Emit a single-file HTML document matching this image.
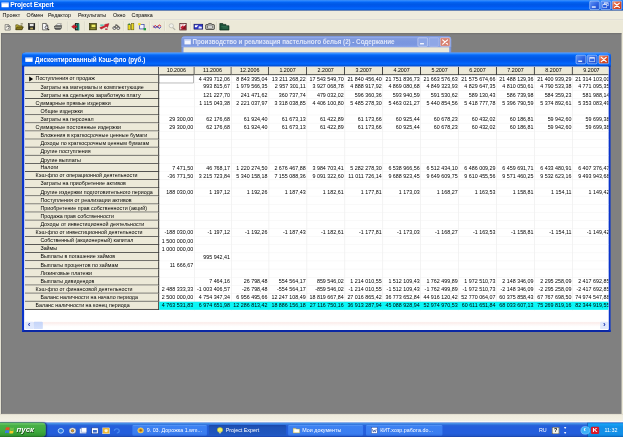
<!DOCTYPE html>
<html lang="ru"><head><meta charset="utf-8"><title>Project Expert</title>
<style>
html,body{margin:0;padding:0;width:623px;height:437px;overflow:hidden;background:#808080;}
#scr{position:absolute;left:0;top:0;width:1280px;height:1024px;transform-origin:0 0;transform:scale(0.48672,0.42676);overflow:hidden;filter:hue-rotate(0deg);font-family:"Liberation Sans",sans-serif;font-size:11px;color:#000;}
#scr div,#scr span{position:absolute;box-sizing:border-box;white-space:nowrap;}
.tb{background:linear-gradient(#0a5fe8 0%,#3d95ff 6%,#1a7bff 12%,#0463f2 22%,#0058e6 40%,#0058ee 60%,#0466fb 78%,#0260ee 88%,#0048c8 96%,#0038a8 100%);}
.tbi{background:linear-gradient(#7a96df 0%,#95acec 8%,#829cdf 20%,#7a96df 50%,#7b97e0 80%,#8aa4e8 92%,#7088d0 100%);}
.ttl{color:#fff;font-weight:bold;font-size:13px;transform:scaleY(1.18);}
.cb{border:1px solid #fff;border-radius:3px;width:21px;height:21px;background:linear-gradient(135deg,#5f93f5,#2a5fe0 60%,#2050c8);}
.cb.x{background:linear-gradient(135deg,#f0a080,#e0522a 50%,#c03a18);}
.cbi{border:1px solid #e6ebf8;border-radius:3px;width:21px;height:21px;background:#8da6e6;}
.cbi.x{background:#d88070;}
.m{top:3px;font-size:11px;}
.lab{left:0;width:275.9px;height:19px;background:#ece9d8;border-bottom:2px solid #383838;border-right:2px solid #383838;line-height:19px;font-size:11px;}
.num{height:19px;line-height:19px;text-align:right;font-size:11px;padding-right:3px;transform:scaleY(1.1);}
.lt{height:17px;line-height:17px;font-size:11px;transform:scaleY(1.18);}
.hd span{position:static !important;display:inline-block;transform:scaleY(1.12);}
.hd{top:0;height:19px;background:#ece9d8;border-right:2px solid #383838;border-bottom:2px solid #383838;text-align:center;line-height:16px;font-size:11px;}
.vl{top:19px;width:1px;background:#e6e6e6;}
.hl{left:0;height:1px;background:#f0f0f0;}
.tk{top:3px;height:25px;border-radius:3px;background:linear-gradient(#5c9bf5 0%,#3c81f3 12%,#3a7df0 80%,#316fe0 100%);color:#fff;font-size:11px;line-height:24px;}
.tk.on{background:linear-gradient(#1b48a8 0%,#1e52b7 20%,#2158c2 100%);}
.sep{width:2px;top:4px;height:24px;border-left:1px solid #d2cfbf;border-right:1px solid #f8f7f0;}
</style></head><body><div id="scr">

<div class="tb" style="left:0;top:0;width:1280px;height:25px;"></div>
<div style="left:3px;top:6px;width:15px;height:11px;background:#fff;border-top:2px solid #8fb8ff;"></div>
<span class="ttl" style="left:21px;top:3px;font-size:14px;letter-spacing:-0.4px;">Project Expert</span>
<div class="cb" style="left:1211px;top:2px;"><div style="left:4px;top:12px;width:8px;height:3px;background:#fff;"></div></div>
<div class="cb" style="left:1234px;top:2px;"><div style="left:6px;top:3px;width:9px;height:8px;border:1px solid #fff;border-top-width:2px;"></div><div style="left:3px;top:7px;width:9px;height:8px;border:1px solid #fff;border-top-width:2px;background:#2a5fe0;"></div></div>
<div class="cb x" style="left:1257px;top:2px;"><svg style="position:absolute;left:0;top:0" width="19" height="19" viewBox="0 0 19 19"><path d="M4.500 4.500l10 10M14.500 4.500l-10 10" stroke="#fff" stroke-width="2.600" stroke-linecap="round"/></svg></div>
<div style="left:0;top:25px;width:1280px;height:21px;background:#efecde;border-bottom:1px solid #b4b1a2;"></div>
<span class="m" style="left:5.3px;top:30px;">Проект</span>
<span class="m" style="left:54.4px;top:30px;">Обмен</span>
<span class="m" style="left:98.6px;top:30px;">Редактор</span>
<span class="m" style="left:160.1px;top:30px;">Результаты</span>
<span class="m" style="left:232.2px;top:30px;">Окно</span>
<span class="m" style="left:270.4px;top:30px;">Справка</span>
<div style="left:0;top:46px;width:1280px;height:33px;background:#ece9d8;border-top:1px solid #fff;"></div>
<div class="sep" style="left:79.1px;top:50px;height:22px;"></div>
<div class="sep" style="left:137.7px;top:50px;height:22px;"></div>
<div class="sep" style="left:172.6px;top:50px;height:22px;"></div>
<div class="sep" style="left:253.7px;top:50px;height:22px;"></div>
<div class="sep" style="left:307.2px;top:50px;height:22px;"></div>
<div class="sep" style="left:338.0px;top:50px;height:22px;"></div>
<div class="sep" style="left:391.4px;top:50px;height:22px;"></div>
<div class="sep" style="left:444.8px;top:50px;height:22px;"></div>
<svg style="position:absolute;left:8.0px;top:54px;overflow:visible" width="16" height="17" viewBox="0 0 16 16" preserveAspectRatio="none"><path d="M2.5 3.5h7l3.5 3.5v8.5h-10.5z" fill="#f6f4ea" stroke="#444" stroke-width="1.2"/><path d="M9 3.5v4h4" fill="none" stroke="#444"/><path d="M5 10a3 3 0 1 1 3 3" fill="none" stroke="#555" stroke-width="1.6"/></svg>
<svg style="position:absolute;left:32.3px;top:54px;overflow:visible" width="16" height="17" viewBox="0 0 16 16" preserveAspectRatio="none"><path d="M0.5 4h5l1 2h7v8.5h-13z" fill="#c8b838" stroke="#3a3408" stroke-width="1.2"/><path d="M3 8.5h13l-3 6H0.5z" fill="#847618" stroke="#3a3408" stroke-width="1.2"/><path d="M10 2l4-1-1 3" fill="none" stroke="#3a3408"/></svg>
<svg style="position:absolute;left:56.5px;top:54px;overflow:visible" width="16" height="17" viewBox="0 0 16 16" preserveAspectRatio="none"><rect x="1.5" y="1.5" width="13" height="13" fill="#202020" stroke="#000"/><rect x="4" y="2" width="8" height="5" fill="#e8e8e8"/><rect x="5" y="10" width="6" height="4" fill="#b8a860"/></svg>
<svg style="position:absolute;left:85.7px;top:54px;overflow:visible" width="16" height="17" viewBox="0 0 16 16" preserveAspectRatio="none"><path d="M1.5 1h7l3.5 3.5v10.5h-10.5z" fill="#fff" stroke="#222" stroke-width="1.3"/><path d="M8.5 1v4h3.5" fill="none" stroke="#222"/><circle cx="9.5" cy="9.5" r="3" fill="#e8e8f4" stroke="#222" stroke-width="1.4"/><path d="M11.5 12l3.5 3.5" stroke="#222" stroke-width="2.2"/></svg>
<svg style="position:absolute;left:112.0px;top:54px;overflow:visible" width="16" height="17" viewBox="0 0 16 16" preserveAspectRatio="none"><path d="M3 6l3-4.5h8l-2.5 4.5z" fill="#fff" stroke="#444"/><path d="M0.5 7l2-1.5h13l-1.5 1.5z" fill="#d0d0c8" stroke="#333"/><rect x="0.5" y="7" width="14" height="5.5" fill="#a4a49c" stroke="#333"/><rect x="2.5" y="11.5" width="10" height="3" fill="#777" stroke="#333"/></svg>
<svg style="position:absolute;left:147.1px;top:54px;overflow:visible" width="16" height="17" viewBox="0 0 16 16" preserveAspectRatio="none"><rect x="7.5" y="0.5" width="7" height="15" fill="#141414" stroke="#000"/><rect x="13" y="1" width="3" height="15" fill="#1a9080"/><path d="M9 3v10l3 2V1z" fill="#30a898"/><path d="M0 8l6-5v3h5v4H6v3z" fill="#d81828" stroke="#780010" stroke-width=".7"/></svg>
<svg style="position:absolute;left:182.5px;top:54px;overflow:visible" width="16" height="17" viewBox="0 0 16 16" preserveAspectRatio="none"><rect x="1" y="1" width="14" height="14" fill="#5c5c14" stroke="#2c2c04" stroke-width="1.4"/><rect x="5" y="3.5" width="8" height="5.5" fill="#ecec68"/><rect x="3" y="10.5" width="10" height="3" fill="#8c8c2c"/></svg>
<svg style="position:absolute;left:206.5px;top:54px;overflow:visible" width="16" height="17" viewBox="0 0 16 16" preserveAspectRatio="none"><path d="M-1 3h7v4h-7z" fill="#68c8b8"/><path d="M-2 10l10-4v-3l9-2-3 9-2.500-2.500-11 6z" fill="#d42030" stroke="#7c0c18" stroke-width=".7"/><rect x="9" y="12" width="5" height="3" fill="#b03040"/></svg>
<svg style="position:absolute;left:230.7px;top:54px;overflow:visible" width="16" height="17" viewBox="0 0 16 16" preserveAspectRatio="none"><circle cx="4" cy="11" r="3.2" fill="#eee" stroke="#222" stroke-width="1.4"/><circle cx="12" cy="11" r="3.2" fill="#eee" stroke="#222" stroke-width="1.4"/><path d="M4 11l3-6h4l1 6M6 4h3" fill="none" stroke="#222" stroke-width="1.4"/></svg>
<svg style="position:absolute;left:261.1px;top:54px;overflow:visible" width="16" height="17" viewBox="0 0 16 16" preserveAspectRatio="none"><rect x="2" y="3" width="5" height="12" fill="#e8d820" stroke="#504800"/><rect x="9" y="1" width="5" height="14" fill="#e8d820" stroke="#504800"/><rect x="3" y="1" width="3" height="3" fill="#208040"/></svg>
<svg style="position:absolute;left:283.5px;top:54px;overflow:visible" width="16" height="17" viewBox="0 0 16 16" preserveAspectRatio="none"><rect x="3" y="3" width="9" height="10" fill="#f4f4ff" stroke="#2030a0" stroke-width="1.4"/><rect x="0" y="0" width="5" height="5" fill="#f0e020"/><rect x="11" y="11" width="5" height="5" fill="#20a040"/></svg>
<svg style="position:absolute;left:315.4px;top:54px;overflow:visible" width="16" height="17" viewBox="0 0 16 16" preserveAspectRatio="none"><path d="M0 10l4-5 4 5 4-6 4 3" fill="none" stroke="#d02030" stroke-width="2"/><path d="M0 6l4 5 4-4 4 5 4-4" fill="none" stroke="#2030c0" stroke-width="2"/></svg>
<svg style="position:absolute;left:345.0px;top:54px;overflow:visible" width="16" height="17" viewBox="0 0 16 16" preserveAspectRatio="none"><circle cx="7" cy="6" r="4.5" fill="#f0f0ea" stroke="#b8b8b0" stroke-width="1.5"/><path d="M10 10l5 5" stroke="#b0b0a8" stroke-width="2.4"/></svg>
<svg style="position:absolute;left:368.4px;top:54px;overflow:visible" width="16" height="17" viewBox="0 0 16 16" preserveAspectRatio="none"><rect x="1.5" y="0.8" width="13" height="14.5" fill="#f8eef0" stroke="#40080c" stroke-width="1.5"/><path d="M14 3v12H3z" fill="#8c1020"/><path d="M3 9l5-4 2 3-5 5z" fill="#c81830"/><rect x="4" y="2.500" width="6" height="2" fill="#e8b0b8"/></svg>
<svg style="position:absolute;left:397.7px;top:54px;overflow:visible" width="19" height="17" viewBox="0 0 16 16" preserveAspectRatio="none"><rect x="0.5" y="2.500" width="15" height="11" fill="#2c34c8" stroke="#10145c" stroke-width="1.2"/><path d="M2 5h6l-3 4H2z" fill="#fff"/><path d="M9 7l5 1v4H8z" fill="#e8ecff"/></svg>
<svg style="position:absolute;left:421.8px;top:54px;overflow:visible" width="19" height="17" viewBox="0 0 16 16" preserveAspectRatio="none"><rect x="0.6" y="3.500" width="14.800" height="10.500" rx="1" fill="#d4d4cc" stroke="#1c1c1c" stroke-width="1.5"/><rect x="4" y="6.500" width="8" height="4.500" fill="#f8f8f8" stroke="#444"/><path d="M4 3.500l2-2.500h4l2 2.500" fill="#bbb" stroke="#1c1c1c" stroke-width="1.2"/></svg>
<svg style="position:absolute;left:451.3px;top:54px;overflow:visible" width="20" height="17" viewBox="0 0 16 16" preserveAspectRatio="none"><path d="M0.500 5V1h5v2h5v3h5v9.500h-15z" fill="#1c5038" stroke="#0a2818" stroke-width="1.2"/><path d="M3 8h10M5 11h9" stroke="#3c7c5c" stroke-width="1.4"/></svg>
<div style="left:0;top:77px;width:1280px;height:893px;background:#ece9d8;"></div>
<div style="left:2px;top:78px;width:1275px;height:892px;background:#808080;border-top:2px solid #646464;border-left:1px solid #6a6a6a;"></div>
<div style="left:0;top:970px;width:1280px;height:21px;background:linear-gradient(#d8d4c4 0%,#eeebdd 12%,#f1eee1 50%,#f3f0e5 75%,#ffffff 90%,#ffffff 100%);"></div>
<div style="left:372.5px;top:85px;width:554.5px;height:60px;background:#ece9d8;border:4px solid #7a96df;border-radius:7px 7px 0 0;"></div>
<div class="tbi" style="left:372.5px;top:85px;width:554.5px;height:26px;border-radius:7px 7px 0 0;"></div>
<div style="left:378.5px;top:92px;width:13px;height:12px;background:#f4f6ff;border-top:3px solid #b8c8f4;"></div>
<span class="ttl" style="left:395.5px;top:90px;color:#dfe6fa;letter-spacing:-0.12px;">Производство и реализация пастельного белья (2) - Содержание</span>
<div class="cbi" style="left:858.0px;top:88px;"><div style="left:4px;top:12px;width:8px;height:3px;background:#fff;"></div></div>
<div class="cbi" style="left:881.0px;top:88px;background:#8fa7e6;border-color:#c0ccf2;"></div>
<div class="cbi x" style="left:904.0px;top:88px;"><svg style="position:absolute;left:0;top:0" width="19" height="19" viewBox="0 0 19 19"><path d="M4.500 4.500l10 10M14.500 4.500l-10 10" stroke="#fff" stroke-width="2.600" stroke-linecap="round"/></svg></div>
<div style="left:45px;top:122.5px;width:1210px;height:655.5px;background:#fff;border:5px solid #0a34cc;border-bottom-color:#0a27a4;border-top:0;border-radius:8px 8px 0 0;"></div>
<div class="tb" style="left:45px;top:122.5px;width:1210px;height:33px;border-radius:8px 8px 0 0;"></div>
<div style="left:52px;top:135.0px;width:15px;height:10px;background:#fff;border-top:2px solid #9cc0ff;"></div>
<span class="ttl" style="left:72px;top:133.0px;">Дисконтированный Кэш-фло (руб.)</span>
<div class="cb" style="left:1183.0px;top:128.5px;"><div style="left:4px;top:12px;width:8px;height:3px;background:#fff;"></div></div>
<div class="cb" style="left:1206.2px;top:128.5px;"><div style="left:4px;top:4px;width:11px;height:11px;border:1px solid #fff;border-top-width:3px;"></div></div>
<div class="cb x" style="left:1229.7px;top:128.5px;"><svg style="position:absolute;left:0;top:0" width="19" height="19" viewBox="0 0 19 19"><path d="M4.500 4.500l10 10M14.500 4.500l-10 10" stroke="#fff" stroke-width="2.600" stroke-linecap="round"/></svg></div>
<div style="left:51px;top:156.5px;width:1199px;height:596.5px;overflow:hidden;background:#fff;">
<div class="hd" style="left:0;width:275.9px;"></div>
<div class="hd" style="left:275.9px;width:72.9px;"><span>10.2006</span></div>
<div class="hd" style="left:348.8px;width:75.8px;"><span>11.2006</span></div>
<div class="hd" style="left:424.6px;width:77.1px;"><span>12.2006</span></div>
<div class="hd" style="left:501.7px;width:78.3px;"><span>1.2007</span></div>
<div class="hd" style="left:580.0px;width:78.2px;"><span>2.2007</span></div>
<div class="hd" style="left:658.2px;width:77.9px;"><span>3.2007</span></div>
<div class="hd" style="left:736.1px;width:78.1px;"><span>4.2007</span></div>
<div class="hd" style="left:814.2px;width:78.1px;"><span>5.2007</span></div>
<div class="hd" style="left:892.3px;width:77.8px;"><span>6.2007</span></div>
<div class="hd" style="left:970.1px;width:78.1px;"><span>7.2007</span></div>
<div class="hd" style="left:1048.2px;width:77.9px;"><span>8.2007</span></div>
<div class="hd" style="left:1126.1px;width:78.0px;"><span>9.2007</span></div>
<div class="vl" style="left:347.8px;height:551px;"></div>
<div class="vl" style="left:423.6px;height:551px;"></div>
<div class="vl" style="left:500.7px;height:551px;"></div>
<div class="vl" style="left:579.0px;height:551px;"></div>
<div class="vl" style="left:657.2px;height:551px;"></div>
<div class="vl" style="left:735.1px;height:551px;"></div>
<div class="vl" style="left:813.2px;height:551px;"></div>
<div class="vl" style="left:891.3px;height:551px;"></div>
<div class="vl" style="left:969.1px;height:551px;"></div>
<div class="vl" style="left:1047.2px;height:551px;"></div>
<div class="vl" style="left:1125.1px;height:551px;"></div>
<div class="vl" style="left:1203.1px;height:551px;"></div>
<div class="hl" style="top:36.97px;width:1199px;left:275.9px;"></div>
<div class="hl" style="top:55.94px;width:1199px;left:275.9px;"></div>
<div class="hl" style="top:74.91px;width:1199px;left:275.9px;"></div>
<div class="hl" style="top:93.88px;width:1199px;left:275.9px;"></div>
<div class="hl" style="top:112.85px;width:1199px;left:275.9px;"></div>
<div class="hl" style="top:131.82px;width:1199px;left:275.9px;"></div>
<div class="hl" style="top:150.79px;width:1199px;left:275.9px;"></div>
<div class="hl" style="top:169.76px;width:1199px;left:275.9px;"></div>
<div class="hl" style="top:188.73px;width:1199px;left:275.9px;"></div>
<div class="hl" style="top:207.70px;width:1199px;left:275.9px;"></div>
<div class="hl" style="top:226.67px;width:1199px;left:275.9px;"></div>
<div class="hl" style="top:245.64px;width:1199px;left:275.9px;"></div>
<div class="hl" style="top:264.61px;width:1199px;left:275.9px;"></div>
<div class="hl" style="top:283.58px;width:1199px;left:275.9px;"></div>
<div class="hl" style="top:302.55px;width:1199px;left:275.9px;"></div>
<div class="hl" style="top:321.52px;width:1199px;left:275.9px;"></div>
<div class="hl" style="top:340.49px;width:1199px;left:275.9px;"></div>
<div class="hl" style="top:359.46px;width:1199px;left:275.9px;"></div>
<div class="hl" style="top:378.43px;width:1199px;left:275.9px;"></div>
<div class="hl" style="top:397.40px;width:1199px;left:275.9px;"></div>
<div class="hl" style="top:416.37px;width:1199px;left:275.9px;"></div>
<div class="hl" style="top:435.34px;width:1199px;left:275.9px;"></div>
<div class="hl" style="top:454.31px;width:1199px;left:275.9px;"></div>
<div class="hl" style="top:473.28px;width:1199px;left:275.9px;"></div>
<div class="hl" style="top:492.25px;width:1199px;left:275.9px;"></div>
<div class="hl" style="top:511.22px;width:1199px;left:275.9px;"></div>
<div class="hl" style="top:530.19px;width:1199px;left:275.9px;"></div>
<div class="hl" style="top:549.16px;width:1199px;left:275.9px;"></div>
<div class="hl" style="top:568.13px;width:1199px;left:275.9px;"></div>
<div class="lab" style="top:19.00px;"></div><div class="lt" style="top:19.30px;left:22px;">Поступления от продаж</div>
<div class="num" style="left:348.8px;top:19.00px;width:75.8px;">4 439 712,06</div>
<div class="num" style="left:424.6px;top:19.00px;width:77.1px;">8 843 395,04</div>
<div class="num" style="left:501.7px;top:19.00px;width:78.3px;">13 211 268,22</div>
<div class="num" style="left:580.0px;top:19.00px;width:78.2px;">17 543 549,70</div>
<div class="num" style="left:658.2px;top:19.00px;width:77.9px;">21 840 456,40</div>
<div class="num" style="left:736.1px;top:19.00px;width:78.1px;">21 751 836,73</div>
<div class="num" style="left:814.2px;top:19.00px;width:78.1px;">21 663 576,63</div>
<div class="num" style="left:892.3px;top:19.00px;width:77.8px;">21 575 674,66</div>
<div class="num" style="left:970.1px;top:19.00px;width:78.1px;">21 488 129,36</div>
<div class="num" style="left:1048.2px;top:19.00px;width:77.9px;">21 400 939,29</div>
<div class="num" style="left:1126.1px;top:19.00px;width:78.0px;">21 314 103,00</div>
<div class="lab" style="top:37.97px;"></div><div class="lt" style="top:38.27px;left:32px;">Затраты на материалы и комплектующие</div>
<div class="num" style="left:348.8px;top:37.97px;width:75.8px;">993 815,67</div>
<div class="num" style="left:424.6px;top:37.97px;width:77.1px;">1 979 566,35</div>
<div class="num" style="left:501.7px;top:37.97px;width:78.3px;">2 957 301,11</div>
<div class="num" style="left:580.0px;top:37.97px;width:78.2px;">3 927 068,78</div>
<div class="num" style="left:658.2px;top:37.97px;width:77.9px;">4 888 917,92</div>
<div class="num" style="left:736.1px;top:37.97px;width:78.1px;">4 869 080,68</div>
<div class="num" style="left:814.2px;top:37.97px;width:78.1px;">4 849 323,93</div>
<div class="num" style="left:892.3px;top:37.97px;width:77.8px;">4 829 647,35</div>
<div class="num" style="left:970.1px;top:37.97px;width:78.1px;">4 810 050,61</div>
<div class="num" style="left:1048.2px;top:37.97px;width:77.9px;">4 790 533,38</div>
<div class="num" style="left:1126.1px;top:37.97px;width:78.0px;">4 771 095,35</div>
<div class="lab" style="top:56.94px;"></div><div class="lt" style="top:57.24px;left:32px;">Затраты на сдельную заработную плату</div>
<div class="num" style="left:348.8px;top:56.94px;width:75.8px;">121 227,70</div>
<div class="num" style="left:424.6px;top:56.94px;width:77.1px;">241 471,62</div>
<div class="num" style="left:501.7px;top:56.94px;width:78.3px;">360 737,74</div>
<div class="num" style="left:580.0px;top:56.94px;width:78.2px;">479 032,02</div>
<div class="num" style="left:658.2px;top:56.94px;width:77.9px;">596 360,36</div>
<div class="num" style="left:736.1px;top:56.94px;width:78.1px;">593 940,59</div>
<div class="num" style="left:814.2px;top:56.94px;width:78.1px;">591 530,62</div>
<div class="num" style="left:892.3px;top:56.94px;width:77.8px;">589 130,43</div>
<div class="num" style="left:970.1px;top:56.94px;width:78.1px;">586 739,98</div>
<div class="num" style="left:1048.2px;top:56.94px;width:77.9px;">584 359,23</div>
<div class="num" style="left:1126.1px;top:56.94px;width:78.0px;">581 988,14</div>
<div class="lab" style="top:75.91px;"></div><div class="lt" style="top:76.21px;left:22px;">Суммарные прямые издержки</div>
<div class="num" style="left:348.8px;top:75.91px;width:75.8px;">1 115 043,38</div>
<div class="num" style="left:424.6px;top:75.91px;width:77.1px;">2 221 037,97</div>
<div class="num" style="left:501.7px;top:75.91px;width:78.3px;">3 318 038,85</div>
<div class="num" style="left:580.0px;top:75.91px;width:78.2px;">4 406 100,80</div>
<div class="num" style="left:658.2px;top:75.91px;width:77.9px;">5 485 278,30</div>
<div class="num" style="left:736.1px;top:75.91px;width:78.1px;">5 463 021,27</div>
<div class="num" style="left:814.2px;top:75.91px;width:78.1px;">5 440 854,56</div>
<div class="num" style="left:892.3px;top:75.91px;width:77.8px;">5 418 777,78</div>
<div class="num" style="left:970.1px;top:75.91px;width:78.1px;">5 396 790,59</div>
<div class="num" style="left:1048.2px;top:75.91px;width:77.9px;">5 374 892,61</div>
<div class="num" style="left:1126.1px;top:75.91px;width:78.0px;">5 353 083,49</div>
<div class="lab" style="top:94.88px;"></div><div class="lt" style="top:95.18px;left:32px;">Общие издержки</div>
<div class="lab" style="top:113.85px;"></div><div class="lt" style="top:114.15px;left:32px;">Затраты на персонал</div>
<div class="num" style="left:275.9px;top:113.85px;width:72.9px;">29 300,00</div>
<div class="num" style="left:348.8px;top:113.85px;width:75.8px;">62 176,68</div>
<div class="num" style="left:424.6px;top:113.85px;width:77.1px;">61 924,40</div>
<div class="num" style="left:501.7px;top:113.85px;width:78.3px;">61 673,13</div>
<div class="num" style="left:580.0px;top:113.85px;width:78.2px;">61 422,89</div>
<div class="num" style="left:658.2px;top:113.85px;width:77.9px;">61 173,66</div>
<div class="num" style="left:736.1px;top:113.85px;width:78.1px;">60 925,44</div>
<div class="num" style="left:814.2px;top:113.85px;width:78.1px;">60 678,23</div>
<div class="num" style="left:892.3px;top:113.85px;width:77.8px;">60 432,02</div>
<div class="num" style="left:970.1px;top:113.85px;width:78.1px;">60 186,81</div>
<div class="num" style="left:1048.2px;top:113.85px;width:77.9px;">59 942,60</div>
<div class="num" style="left:1126.1px;top:113.85px;width:78.0px;">59 699,38</div>
<div class="lab" style="top:132.82px;"></div><div class="lt" style="top:133.12px;left:22px;">Суммарные постоянные издержки</div>
<div class="num" style="left:275.9px;top:132.82px;width:72.9px;">29 300,00</div>
<div class="num" style="left:348.8px;top:132.82px;width:75.8px;">62 176,68</div>
<div class="num" style="left:424.6px;top:132.82px;width:77.1px;">61 924,40</div>
<div class="num" style="left:501.7px;top:132.82px;width:78.3px;">61 673,13</div>
<div class="num" style="left:580.0px;top:132.82px;width:78.2px;">61 422,89</div>
<div class="num" style="left:658.2px;top:132.82px;width:77.9px;">61 173,66</div>
<div class="num" style="left:736.1px;top:132.82px;width:78.1px;">60 925,44</div>
<div class="num" style="left:814.2px;top:132.82px;width:78.1px;">60 678,23</div>
<div class="num" style="left:892.3px;top:132.82px;width:77.8px;">60 432,02</div>
<div class="num" style="left:970.1px;top:132.82px;width:78.1px;">60 186,81</div>
<div class="num" style="left:1048.2px;top:132.82px;width:77.9px;">59 942,60</div>
<div class="num" style="left:1126.1px;top:132.82px;width:78.0px;">59 699,38</div>
<div class="lab" style="top:151.79px;"></div><div class="lt" style="top:152.09px;left:32px;">Вложения в краткосрочные ценные бумаги</div>
<div class="lab" style="top:170.76px;"></div><div class="lt" style="top:171.06px;left:32px;">Доходы по краткосрочным ценным бумагам</div>
<div class="lab" style="top:189.73px;"></div><div class="lt" style="top:190.03px;left:32px;">Другие поступления</div>
<div class="lab" style="top:208.70px;"></div><div class="lt" style="top:209.00px;left:32px;">Другие выплаты</div>
<div class="lab" style="top:227.67px;"></div><div class="lt" style="top:227.97px;left:32px;">Налоги</div>
<div class="num" style="left:275.9px;top:227.67px;width:72.9px;">7 471,50</div>
<div class="num" style="left:348.8px;top:227.67px;width:75.8px;">46 768,17</div>
<div class="num" style="left:424.6px;top:227.67px;width:77.1px;">1 220 274,50</div>
<div class="num" style="left:501.7px;top:227.67px;width:78.3px;">2 676 467,88</div>
<div class="num" style="left:580.0px;top:227.67px;width:78.2px;">3 984 703,41</div>
<div class="num" style="left:658.2px;top:227.67px;width:77.9px;">5 282 278,30</div>
<div class="num" style="left:736.1px;top:227.67px;width:78.1px;">6 538 966,56</div>
<div class="num" style="left:814.2px;top:227.67px;width:78.1px;">6 512 434,10</div>
<div class="num" style="left:892.3px;top:227.67px;width:77.8px;">6 486 009,29</div>
<div class="num" style="left:970.1px;top:227.67px;width:78.1px;">6 459 691,71</div>
<div class="num" style="left:1048.2px;top:227.67px;width:77.9px;">6 433 480,91</div>
<div class="num" style="left:1126.1px;top:227.67px;width:78.0px;">6 407 376,47</div>
<div class="lab" style="top:246.64px;"></div><div class="lt" style="top:246.94px;left:22px;">Кэш-фло от операционной деятельности</div>
<div class="num" style="left:275.9px;top:246.64px;width:72.9px;">-36 771,50</div>
<div class="num" style="left:348.8px;top:246.64px;width:75.8px;">3 215 723,84</div>
<div class="num" style="left:424.6px;top:246.64px;width:77.1px;">5 340 158,18</div>
<div class="num" style="left:501.7px;top:246.64px;width:78.3px;">7 155 088,36</div>
<div class="num" style="left:580.0px;top:246.64px;width:78.2px;">9 091 322,60</div>
<div class="num" style="left:658.2px;top:246.64px;width:77.9px;">11 011 726,14</div>
<div class="num" style="left:736.1px;top:246.64px;width:78.1px;">9 688 923,45</div>
<div class="num" style="left:814.2px;top:246.64px;width:78.1px;">9 649 609,75</div>
<div class="num" style="left:892.3px;top:246.64px;width:77.8px;">9 610 455,56</div>
<div class="num" style="left:970.1px;top:246.64px;width:78.1px;">9 571 460,25</div>
<div class="num" style="left:1048.2px;top:246.64px;width:77.9px;">9 532 623,16</div>
<div class="num" style="left:1126.1px;top:246.64px;width:78.0px;">9 493 943,68</div>
<div class="lab" style="top:265.61px;"></div><div class="lt" style="top:265.91px;left:32px;">Затраты на приобретение активов</div>
<div class="lab" style="top:284.58px;"></div><div class="lt" style="top:284.88px;left:32px;">Другие издержки подготовительного периода</div>
<div class="num" style="left:275.9px;top:284.58px;width:72.9px;">188 030,00</div>
<div class="num" style="left:348.8px;top:284.58px;width:75.8px;">1 197,12</div>
<div class="num" style="left:424.6px;top:284.58px;width:77.1px;">1 192,26</div>
<div class="num" style="left:501.7px;top:284.58px;width:78.3px;">1 187,43</div>
<div class="num" style="left:580.0px;top:284.58px;width:78.2px;">1 182,61</div>
<div class="num" style="left:658.2px;top:284.58px;width:77.9px;">1 177,81</div>
<div class="num" style="left:736.1px;top:284.58px;width:78.1px;">1 173,03</div>
<div class="num" style="left:814.2px;top:284.58px;width:78.1px;">1 168,27</div>
<div class="num" style="left:892.3px;top:284.58px;width:77.8px;">1 163,53</div>
<div class="num" style="left:970.1px;top:284.58px;width:78.1px;">1 158,81</div>
<div class="num" style="left:1048.2px;top:284.58px;width:77.9px;">1 154,11</div>
<div class="num" style="left:1126.1px;top:284.58px;width:78.0px;">1 149,42</div>
<div class="lab" style="top:303.55px;"></div><div class="lt" style="top:303.85px;left:32px;">Поступления от реализации активов</div>
<div class="lab" style="top:322.52px;"></div><div class="lt" style="top:322.82px;left:32px;">Приобретение прав собственности (акций)</div>
<div class="lab" style="top:341.49px;"></div><div class="lt" style="top:341.79px;left:32px;">Продажа прав собственности</div>
<div class="lab" style="top:360.46px;"></div><div class="lt" style="top:360.76px;left:32px;">Доходы от инвестиционной деятельности</div>
<div class="lab" style="top:379.43px;"></div><div class="lt" style="top:379.73px;left:22px;">Кэш-фло от инвестиционной деятельности</div>
<div class="num" style="left:275.9px;top:379.43px;width:72.9px;">-188 030,00</div>
<div class="num" style="left:348.8px;top:379.43px;width:75.8px;">-1 197,12</div>
<div class="num" style="left:424.6px;top:379.43px;width:77.1px;">-1 192,26</div>
<div class="num" style="left:501.7px;top:379.43px;width:78.3px;">-1 187,43</div>
<div class="num" style="left:580.0px;top:379.43px;width:78.2px;">-1 182,61</div>
<div class="num" style="left:658.2px;top:379.43px;width:77.9px;">-1 177,81</div>
<div class="num" style="left:736.1px;top:379.43px;width:78.1px;">-1 173,03</div>
<div class="num" style="left:814.2px;top:379.43px;width:78.1px;">-1 168,27</div>
<div class="num" style="left:892.3px;top:379.43px;width:77.8px;">-1 163,53</div>
<div class="num" style="left:970.1px;top:379.43px;width:78.1px;">-1 158,81</div>
<div class="num" style="left:1048.2px;top:379.43px;width:77.9px;">-1 154,11</div>
<div class="num" style="left:1126.1px;top:379.43px;width:78.0px;">-1 149,42</div>
<div class="lab" style="top:398.40px;"></div><div class="lt" style="top:398.70px;left:32px;">Собственный (акционерный) капитал</div>
<div class="num" style="left:275.9px;top:398.40px;width:72.9px;">1 500 000,00</div>
<div class="lab" style="top:417.37px;"></div><div class="lt" style="top:417.67px;left:32px;">Займы</div>
<div class="num" style="left:275.9px;top:417.37px;width:72.9px;">1 000 000,00</div>
<div class="lab" style="top:436.34px;"></div><div class="lt" style="top:436.64px;left:32px;">Выплаты в погашение займов</div>
<div class="num" style="left:348.8px;top:436.34px;width:75.8px;">995 942,41</div>
<div class="lab" style="top:455.31px;"></div><div class="lt" style="top:455.61px;left:32px;">Выплаты процентов по займам</div>
<div class="num" style="left:275.9px;top:455.31px;width:72.9px;">11 666,67</div>
<div class="lab" style="top:474.28px;"></div><div class="lt" style="top:474.58px;left:32px;">Лизинговые платежи</div>
<div class="lab" style="top:493.25px;"></div><div class="lt" style="top:493.55px;left:32px;">Выплаты дивидендов</div>
<div class="num" style="left:348.8px;top:493.25px;width:75.8px;">7 464,16</div>
<div class="num" style="left:424.6px;top:493.25px;width:77.1px;">26 798,48</div>
<div class="num" style="left:501.7px;top:493.25px;width:78.3px;">554 564,17</div>
<div class="num" style="left:580.0px;top:493.25px;width:78.2px;">859 546,02</div>
<div class="num" style="left:658.2px;top:493.25px;width:77.9px;">1 214 010,55</div>
<div class="num" style="left:736.1px;top:493.25px;width:78.1px;">1 512 109,43</div>
<div class="num" style="left:814.2px;top:493.25px;width:78.1px;">1 762 499,89</div>
<div class="num" style="left:892.3px;top:493.25px;width:77.8px;">1 972 510,73</div>
<div class="num" style="left:970.1px;top:493.25px;width:78.1px;">2 148 346,09</div>
<div class="num" style="left:1048.2px;top:493.25px;width:77.9px;">2 295 258,09</div>
<div class="num" style="left:1126.1px;top:493.25px;width:78.0px;">2 417 692,85</div>
<div class="lab" style="top:512.22px;"></div><div class="lt" style="top:512.52px;left:22px;">Кэш-фло от финансовой деятельности</div>
<div class="num" style="left:275.9px;top:512.22px;width:72.9px;">2 488 333,33</div>
<div class="num" style="left:348.8px;top:512.22px;width:75.8px;">-1 003 406,57</div>
<div class="num" style="left:424.6px;top:512.22px;width:77.1px;">-26 798,48</div>
<div class="num" style="left:501.7px;top:512.22px;width:78.3px;">-554 564,17</div>
<div class="num" style="left:580.0px;top:512.22px;width:78.2px;">-859 546,02</div>
<div class="num" style="left:658.2px;top:512.22px;width:77.9px;">-1 214 010,55</div>
<div class="num" style="left:736.1px;top:512.22px;width:78.1px;">-1 512 109,43</div>
<div class="num" style="left:814.2px;top:512.22px;width:78.1px;">-1 762 499,89</div>
<div class="num" style="left:892.3px;top:512.22px;width:77.8px;">-1 972 510,73</div>
<div class="num" style="left:970.1px;top:512.22px;width:78.1px;">-2 148 346,09</div>
<div class="num" style="left:1048.2px;top:512.22px;width:77.9px;">-2 295 258,09</div>
<div class="num" style="left:1126.1px;top:512.22px;width:78.0px;">-2 417 692,85</div>
<div class="lab" style="top:531.19px;"></div><div class="lt" style="top:531.49px;left:32px;">Баланс наличности на начало периода</div>
<div class="num" style="left:275.9px;top:531.19px;width:72.9px;">2 500 000,00</div>
<div class="num" style="left:348.8px;top:531.19px;width:75.8px;">4 754 347,34</div>
<div class="num" style="left:424.6px;top:531.19px;width:77.1px;">6 956 495,66</div>
<div class="num" style="left:501.7px;top:531.19px;width:78.3px;">12 247 108,49</div>
<div class="num" style="left:580.0px;top:531.19px;width:78.2px;">18 819 667,84</div>
<div class="num" style="left:658.2px;top:531.19px;width:77.9px;">27 016 865,42</div>
<div class="num" style="left:736.1px;top:531.19px;width:78.1px;">36 773 652,84</div>
<div class="num" style="left:814.2px;top:531.19px;width:78.1px;">44 916 120,42</div>
<div class="num" style="left:892.3px;top:531.19px;width:77.8px;">52 770 064,07</div>
<div class="num" style="left:970.1px;top:531.19px;width:78.1px;">60 375 858,43</div>
<div class="num" style="left:1048.2px;top:531.19px;width:77.9px;">67 767 698,50</div>
<div class="num" style="left:1126.1px;top:531.19px;width:78.0px;">74 974 547,88</div>
<div class="lab" style="top:550.16px;"></div><div class="lt" style="top:550.46px;left:22px;">Баланс наличности на конец периода</div>
<div style="left:275.9px;top:550.16px;width:1199px;height:19px;background:#0cf6f6;"></div>
<div class="num" style="left:275.9px;top:550.16px;width:72.9px;">4 763 531,83</div>
<div class="num" style="left:348.8px;top:550.16px;width:75.8px;">6 974 651,98</div>
<div class="num" style="left:424.6px;top:550.16px;width:77.1px;">12 286 813,42</div>
<div class="num" style="left:501.7px;top:550.16px;width:78.3px;">18 886 156,18</div>
<div class="num" style="left:580.0px;top:550.16px;width:78.2px;">27 116 750,16</div>
<div class="num" style="left:658.2px;top:550.16px;width:77.9px;">36 913 287,94</div>
<div class="num" style="left:736.1px;top:550.16px;width:78.1px;">45 088 928,94</div>
<div class="num" style="left:814.2px;top:550.16px;width:78.1px;">52 974 970,53</div>
<div class="num" style="left:892.3px;top:550.16px;width:77.8px;">60 611 651,84</div>
<div class="num" style="left:970.1px;top:550.16px;width:78.1px;">68 033 607,13</div>
<div class="num" style="left:1048.2px;top:550.16px;width:77.9px;">75 269 819,16</div>
<div class="num" style="left:1126.1px;top:550.16px;width:78.0px;">82 344 919,55</div>
<div style="left:9px;top:22px;width:0;height:0;border-left:8px solid #000;border-top:6px solid transparent;border-bottom:6px solid transparent;"></div>
<div style="left:274.9px;top:19px;width:71.9px;height:19px;border:1px solid #6c6c6c;"></div>
</div>
<div style="left:51px;top:753px;width:1199px;height:18px;background:linear-gradient(#fff 0%,#fbecea 18%,#fdf6f5 40%,#fff 70%);"></div>
<div style="left:52px;top:754px;width:17px;height:17px;background:#dfe8fd;border-radius:2px;"><span style="left:5px;top:-1px;font-size:17px;font-weight:bold;color:#2038b0;line-height:18px;">‹</span></div>
<div style="left:69px;top:754px;width:19px;height:17px;background:linear-gradient(#c4d4f8,#d4e0fc);border-radius:2px;"></div>
<div style="left:1233px;top:754px;width:16px;height:17px;background:#dfe8fd;border-radius:2px;"><span style="left:6px;top:-1px;font-size:17px;font-weight:bold;color:#2038b0;line-height:18px;">›</span></div>
<div style="left:0;top:990px;width:1280px;height:34px;background:linear-gradient(#3168d5 0%,#4993e6 6%,#3f86e6 10%,#2a66d8 18%,#245edc 30%,#245edc 75%,#2258cc 90%,#1941a5 100%);"></div>
<div style="left:0;top:990px;width:94px;height:34px;border-radius:0 9px 9px 0;background:linear-gradient(#2f8a2f 0%,#68c868 8%,#48b048 20%,#3fab3f 60%,#339933 88%,#236b23 100%);box-shadow:2px 0 3px rgba(0,0,40,.5);"></div>
<svg style="position:absolute;left:10px;top:999px" width="22" height="20" viewBox="0 0 22 20"><path d="M2 3q4-2 8 0l-1 6q-4-2-8 0z" fill="#e84c28"/><path d="M11 3q4 2 8 0l-1 6q-4 2-8 0z" fill="#6cc04c"/><path d="M1 10q4-2 8 0l-1 6q-4-2-8 0z" fill="#3c78e8"/><path d="M10 10q4 2 8 0l-1 6q-4 2-8 0z" fill="#f4c828"/></svg>
<span style="left:34px;top:996px;color:#fff;font-size:16px;font-weight:bold;font-style:italic;line-height:24px;text-shadow:1px 1px 1px #1a4a1a;">пуск</span>
<svg style="position:absolute;left:117.3px;top:1001px" width="16" height="17" viewBox="0 0 16 16"><circle cx="8" cy="8" r="5.5" fill="#2a78e0" stroke="#bfe0ff" stroke-width="2"/></svg>
<svg style="position:absolute;left:141.4px;top:1001px" width="16" height="17" viewBox="0 0 16 16"><circle cx="8" cy="8" r="7" fill="#f4f4f4" stroke="#666"/><circle cx="8" cy="8" r="3" fill="#e8a020" stroke="#333"/></svg>
<svg style="position:absolute;left:162.9px;top:1001px" width="16" height="17" viewBox="0 0 16 16"><rect x="1" y="3" width="13" height="11" fill="#e8eefc" stroke="#7088c0"/><rect x="4" y="1" width="11" height="10" fill="#fff" stroke="#7088c0"/></svg>
<svg style="position:absolute;left:186.6px;top:1001px" width="16" height="17" viewBox="0 0 16 16"><rect x="1" y="1" width="14" height="14" fill="#fff" stroke="#1a3c90" stroke-width="1.6"/><rect x="4" y="6" width="8" height="6" fill="#3868c8"/></svg>
<svg style="position:absolute;left:209.8px;top:1001px" width="16" height="17" viewBox="0 0 16 16"><rect x="1" y="1" width="14" height="14" fill="#f0b830" stroke="#fff"/><circle cx="8" cy="8" r="3.5" fill="#fff4d0"/></svg>
<svg style="position:absolute;left:232.4px;top:1001px" width="16" height="17" viewBox="0 0 16 16"><path d="M3 8a5 5 0 1 1 5 5" fill="none" stroke="#4a8cf0" stroke-width="2.5"/></svg>
<div class="tk" style="left:272.4px;top:996px;width:152.7px;"><svg style="position:absolute;left:9px;top:4px" width="16" height="17" viewBox="0 0 16 16"><circle cx="8" cy="8" r="6" fill="#e8b030" stroke="#f8e8a0"/><circle cx="8" cy="8" r="2.5" fill="#a06010"/></svg><span style="left:29px;top:0;">9. 03. Дорожка 1.wm...</span></div>
<div class="tk on" style="left:428.6px;top:996px;width:159.0px;"><svg style="position:absolute;left:15px;top:4px" width="16" height="17" viewBox="0 0 16 16"><circle cx="8" cy="7" r="5.5" fill="#f0f060" stroke="#b8b820"/><rect x="6" y="11" width="4" height="4" fill="#c8c8a0"/></svg><span style="left:35px;top:0;">Project Expert</span></div>
<div class="tk" style="left:592.1px;top:996px;width:154.1px;"><svg style="position:absolute;left:9px;top:4px" width="16" height="17" viewBox="0 0 16 16"><path d="M1 3h6l1 2h7v9H1z" fill="#f8f0c0" stroke="#a89840"/><rect x="4" y="6" width="9" height="6" fill="#fff"/></svg><span style="left:29px;top:0;">Мои документы</span></div>
<div class="tk" style="left:752.0px;top:996px;width:157.0px;"><svg style="position:absolute;left:9px;top:4px" width="16" height="17" viewBox="0 0 16 16"><rect x="2" y="1" width="12" height="14" fill="#fff" stroke="#2a4a9a"/><path d="M4 5l2 7 2-5 2 5 2-7" fill="none" stroke="#2a4a9a" stroke-width="1.5"/></svg><span style="left:29px;top:0;">КИТ.хозр.работа.do...</span></div>
<span style="left:1107.4px;top:1002px;color:#fff;font-size:11px;">RU</span>
<div style="left:1134.1px;top:1001px;width:15px;height:16px;background:#f4f4e8;border:1px solid #333;"><span style="left:3px;top:0;font-size:11px;font-weight:bold;line-height:14px;">?</span></div>
<span style="left:1157.8px;top:997px;color:#fff;font-size:10px;line-height:10px;">▾</span><span style="left:1157.8px;top:1009px;color:#fff;font-size:10px;line-height:10px;">▾</span>
<div style="left:1206.0px;top:990px;width:74.0px;height:34px;background:linear-gradient(#0c5db8 0%,#1a9af0 8%,#16a0f4 14%,#1290e8 30%,#1290e8 80%,#0e80d8 92%,#0a5cb0 100%);border-left:1px solid #0a3c90;"></div>
<div style="left:1192.7px;top:999px;width:19px;height:19px;border-radius:10px;background:#3cb0f8;border:1px solid #a8dcff;"><span style="left:5px;top:-1px;color:#fff;font-size:15px;font-weight:bold;line-height:18px;">‹</span></div>
<div style="left:1214.3px;top:1000px;width:17px;height:17px;background:#d81828;border-radius:3px;"><span style="left:3px;top:0;color:#fff;font-size:14px;font-weight:bold;line-height:17px;">K</span></div>
<span style="left:1241.8px;top:1002px;color:#fff;font-size:11px;">11:32</span>
</div></body></html>
